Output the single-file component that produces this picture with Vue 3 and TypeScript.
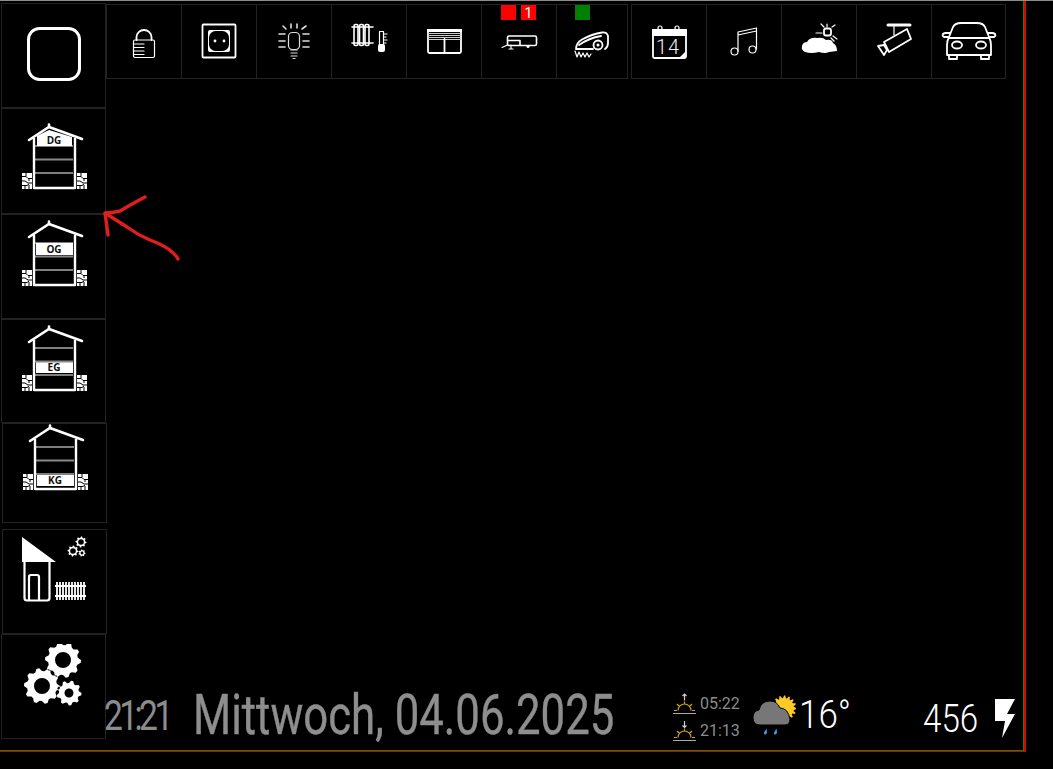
<script setup lang="ts">
interface Floor {
  id: string
  bandTop: number
  bandBottom: number
}

const floors: Floor[] = [
  { id: 'DG', bandTop: 12, bandBottom: 23 },
  { id: 'OG', bandTop: 23, bandBottom: 35 },
  { id: 'EG', bandTop: 37, bandBottom: 48 },
  { id: 'KG', bandTop: 51, bandBottom: 62 },
]

// toothed ring, also used for the sun in the weather icon
function gearPath(cx: number, cy: number, outer: number, inner: number, hole: number, teeth: number): string {
  const pts: string[] = []
  const step = (Math.PI * 2) / (teeth * 4)
  for (let i = 0; i < teeth * 4; i++) {
    const r = i % 4 < 2 ? outer : inner
    const a = i * step
    pts.push(`${(cx + Math.cos(a) * r).toFixed(2)} ${(cy + Math.sin(a) * r).toFixed(2)}`)
  }
  let d = `M${pts.join('L')}Z`
  if (hole > 0) {
    d += `M${cx - hole} ${cy}a${hole} ${hole} 0 1 0 ${hole * 2} 0a${hole} ${hole} 0 1 0 ${-hole * 2} 0Z`
  }
  return d
}

const settingsGears = [
  gearPath(40, 16, 18, 15, 8, 10),
  gearPath(19, 42, 18, 15, 8, 10),
  gearPath(46, 49, 12.5, 10, 4.5, 9),
].join('')

const gardenGears = [
  gearPath(61, 7, 5.5, 4.2, 2.8, 8),
  gearPath(53, 16, 5.5, 4.2, 2.8, 8),
  gearPath(62, 18, 3.6, 2.7, 1.4, 7),
].join('')

const sunSpikes = gearPath(32, 13, 12.5, 10, 0, 16)
</script>

<template>
  <div class="screen">
    <aside class="sidebar">
      <div class="side-tile tile-all">
        <svg class="all-icon" viewBox="0 0 54 54">
          <rect x="1.5" y="1.5" width="51" height="51" rx="11" />
        </svg>
      </div>

      <div v-for="floor in floors" :key="floor.id" class="side-tile" :class="`tile-${floor.id.toLowerCase()}`">
        <svg class="house" viewBox="0 0 72 70">
          <polygon v-if="floor.id === 'DG'" class="band" points="19,23 19,13 31,7 54,14 54,23" />
          <rect v-else class="band" x="18" :y="floor.bandTop" width="37" :height="floor.bandBottom - floor.bandTop" />
          <path class="line-thin" d="M17 23H55M17 50H55" />
          <path class="line-grey" d="M17 36.5H55" />
          <polyline class="roof" points="11,17 31,4 64,16" />
          <path class="roof" d="M31 1.5V4" />
          <path class="walls" d="M16 15V65H57V15" />
          <text class="floor-label" x="36" :y="floor.bandBottom - 2">{{ floor.id }}</text>
          <g v-for="x in [4, 59]" :key="x" :transform="`translate(${x} 50)`">
            <rect class="brick" width="10" height="16" />
            <path class="brick-gap" d="M0 3.5H4L6 5.5H10M0 8H3L6 10H10M0 12.5H5L7 11M4 0V3.5M7 5.5V8M3 12.5V16M7 12V16" />
          </g>
        </svg>
      </div>

      <div class="side-tile tile-garden">
        <svg class="garden" viewBox="0 0 70 70">
          <polygon class="solid" points="2,2 36,27 2,27" />
          <path class="outline" d="M4.5 27V63Q4.5 65.5 7 65.5H27Q29.5 65.5 29.5 63V27M9 65V42Q9 40 11 40H17Q19 40 19 42V65" />
          <path class="fence" d="M35 51H66M35 61H66M37 47V65M40 47V65M43 47V65M46 47V65M49 47V65M52 47V65M55 47V65M58 47V65M61 47V65M64 47V65" />
          <path class="solid" fill-rule="evenodd" :d="gardenGears" />
        </svg>
      </div>

      <div class="side-tile tile-settings">
        <svg class="settings" viewBox="0 0 72 80">
          <path class="solid" fill-rule="evenodd" :d="settingsGears" />
        </svg>
      </div>
    </aside>

    <main class="main">
      <nav class="toolbar">
        <div class="tool">
          <svg viewBox="0 0 75 75">
            <path class="stroke thick" d="M30.5 36V33A7.5 7 0 0 1 45.5 33V36" />
            <rect class="stroke" x="27.5" y="36" width="21" height="17.5" rx="1.5" />
            <path class="stroke" d="M28 40H38M28 43.5H38M28 47H38M28 50.5H38" />
          </svg>
        </div>
        <div class="tool">
          <svg viewBox="0 0 75 75">
            <rect class="stroke thick" x="21.5" y="20.5" width="33" height="33" rx="1" />
            <rect class="solid" x="27" y="26" width="22" height="22" rx="2" />
            <rect class="cut" x="28" y="27" width="20" height="20" rx="6.5" />
            <circle class="solid" cx="34" cy="37" r="1.4" />
            <circle class="solid" cx="43" cy="37" r="1.4" />
          </svg>
        </div>
        <div class="tool">
          <svg viewBox="0 0 75 75">
            <rect class="stroke soft" x="32.5" y="28.5" width="11" height="17" rx="4" />
            <path class="stroke soft" d="M35 46H41M35 49H41M35 52H41M37 54.5H39" />
            <path class="stroke soft wide" d="M23 30H29M23 37H29M23 43H29M47 30H53M47 37H53M47 43H53M27 22L30 25M35 20V24M41 20V24M50 22L46 25" />
          </svg>
        </div>
        <div class="tool">
          <svg viewBox="0 0 75 75">
            <path class="stroke wide" d="M21 23H42M21 39H42" />
            <rect class="stroke wide" x="23" y="20.5" width="4" height="21" rx="1.5" />
            <rect class="stroke wide" x="28.5" y="20.5" width="4" height="21" rx="1.5" />
            <rect class="stroke wide" x="34" y="20.5" width="4" height="21" rx="1.5" />
            <path class="stroke" d="M48.5 41V27.5H52.5V41M52.5 30H56M52.5 33H55M52.5 36H56M52.5 39H55" />
            <rect class="solid" x="47" y="40" width="7" height="8" rx="2" />
          </svg>
        </div>
        <div class="tool">
          <svg viewBox="0 0 75 75">
            <rect class="stroke thick" x="22" y="26" width="33" height="23" rx="1.5" />
            <rect class="solid" x="21" y="25" width="35" height="3" />
            <path class="stroke slat" d="M22 29.5H55M22 31.5H55M22 33.5H55M22 35.5H55" />
            <path class="stroke thick" d="M38.5 35V49" />
          </svg>
        </div>
        <div class="tool">
          <span class="badge badge-red"></span>
          <span class="badge badge-count">1</span>
          <svg viewBox="0 0 75 75">
            <rect class="stroke wide" x="26.5" y="32" width="29" height="9.5" rx="1.5" />
            <path class="stroke wide" d="M27 36.5H39M39 36.5V41" />
            <path class="stroke" d="M21 43.5L26.5 41M30 41V45M28 45H32" />
            <circle class="solid" cx="47" cy="42.5" r="1.5" />
          </svg>
        </div>
        <div class="tool tool-mower">
          <svg viewBox="0 0 75 75">
            <path class="stroke thick" d="M20 45Q20 39 26 35.5Q36 30 46 28.5Q51 28 52 32V39Q52 43 49 45M20 45H37" />
            <path class="stroke thick" d="M23 41Q33 34 45 32" />
            <circle class="stroke thick" cx="42" cy="41" r="4.5" />
            <circle class="solid" cx="42" cy="41" r="1.5" />
            <path class="stroke" d="M19 47L21 53L23 48L25 53L27 49L29 53L31 49L33 53L35 50" />
          </svg>
          <span class="badge badge-green"></span>
        </div>
        <div class="tool">
          <svg viewBox="0 0 75 75">
            <rect class="stroke thick" x="22" y="26" width="33" height="28" rx="1.5" />
            <rect class="solid" x="21" y="25" width="35" height="7" />
            <circle class="stroke" cx="29" cy="24" r="2" />
            <circle class="stroke" cx="46" cy="24" r="2" />
            <text class="calendar-day" x="37" y="50">14</text>
            <polygon class="solid" points="55,47 55,54 48,54" />
          </svg>
        </div>
        <div class="tool">
          <svg viewBox="0 0 75 75">
            <circle class="stroke" cx="28.5" cy="47.5" r="3.5" />
            <circle class="stroke" cx="46.5" cy="45.5" r="3.5" />
            <path class="stroke" d="M32 47V28L50.5 24V45M32 31L50.5 27" />
          </svg>
        </div>
        <div class="tool">
          <svg viewBox="0 0 75 75">
            <path class="solid" d="M24 48Q20 46 21 42Q22 38 26 38Q29 33 36 34Q42 33 45 36Q51 35 52 39Q56 41 56 47L48 48Q44 50 38 48Q30 50 24 48Z" />
            <rect class="stroke thick" x="43" y="24.5" width="7" height="7" rx="2" />
            <path class="stroke" d="M35 29H41M40 20L43 23M46 20V23M51 23L54 21M52 32L56 35M50 34L53 37" />
          </svg>
        </div>
        <div class="tool">
          <svg viewBox="0 0 75 75">
            <path class="stroke bar" d="M32 21H54" />
            <path class="stroke" d="M38 22V31" />
            <polygon class="stroke thick" points="28,38 51,25 55,35 33,48" />
            <polygon class="stroke thick" points="22,42 28,41 31,46 28,51" />
          </svg>
        </div>
        <div class="tool tool-last">
          <svg viewBox="0 0 75 75">
            <path class="stroke thick" d="M18 33L22 23Q24 19 30 19H46Q52 19 54 23L58 33Q60 37 60 41V51H16V41Q16 37 18 33Z" />
            <path class="stroke thick" d="M18 34H58" />
            <path class="stroke thick" d="M18 51V55H26V51M50 51V55H58V51" />
            <path class="stroke thick" d="M17 33H13Q11 32 12 30Q13 29 15 29H19M59 33H63Q65 32 64 30Q63 29 61 29H57" />
            <ellipse class="stroke thick" cx="26" cy="41" rx="5" ry="3.5" />
            <ellipse class="stroke thick" cx="50" cy="41" rx="5" ry="3.5" />
          </svg>
        </div>
      </nav>

      <footer class="status">
        <div class="clock">21:21</div>
        <div class="date">Mittwoch, 04.06.2025</div>

        <div class="sun-times">
          <div class="sun-row">
            <svg class="sun-icon" viewBox="0 0 24 22">
              <path class="sun-horizon" d="M0 20.5H23" />
              <path class="sun-stroke" d="M5 17.5A6.5 6.5 0 0 1 18 17.5M1 17.5H4M19 17.5H22M4 11L6.5 13.5M19 11L16.5 13.5M11.5 8.5V10.5" />
              <path class="sun-arrow" d="M11.5 7.5V1M9.5 3L11.5 1L13.5 3" />
            </svg>
            <span>05:22</span>
          </div>
          <div class="sun-row">
            <svg class="sun-icon" viewBox="0 0 24 22">
              <path class="sun-horizon" d="M0 20.5H23" />
              <path class="sun-stroke" d="M5 17.5A6.5 6.5 0 0 1 18 17.5M1 17.5H4M19 17.5H22M4 11L6.5 13.5M19 11L16.5 13.5M11.5 8.5V10.5" />
              <path class="sun-arrow" d="M11.5 1V7.5M9.5 5.5L11.5 7.5L13.5 5.5" />
            </svg>
            <span>21:13</span>
          </div>
        </div>

        <svg class="weather-icon" viewBox="0 0 44 40">
          <path class="weather-sun" :d="sunSpikes" />
          <path class="weather-cloud" d="M8 30Q1 30 1 22.5Q1 16 7 15Q9 6 18 6Q25 6 28 13Q36 13 38 24Q38 30 33 30Z" />
          <path class="weather-drop" d="M14.5 33.5L12 37.5Q11.5 40 13.5 39.5Q15 39 15 37ZM24.5 33.5L22 37.5Q21.5 40 23.5 39.5Q25 39 25 37Z" />
        </svg>
        <div class="temperature">16°</div>

        <div class="power">456</div>
        <svg class="bolt" viewBox="0 0 20 39">
          <polygon points="0,0 20,0 12,15 20,15 7,39 10,22 0,22" />
        </svg>
      </footer>
    </main>

    <svg class="arrow" viewBox="0 0 90 80">
      <path d="M45 7Q30 15 20 21Q12 23 5 23M5 23L8 45M5 23Q16 30 27 37Q38 45 50 50Q66 56 72 62Q76 65 78 69" />
    </svg>
  </div>
</template>

<style>
html,
body {
  background: #000;
}
</style>

<style scoped>
.screen {
  position: relative;
  display: flex;
  width: 1026px;
  height: 752px;
  box-sizing: border-box;
  background: #000;
  border-right: 2px solid #e00000;
  border-bottom: 1px solid #d00000;
  box-shadow: inset -1px -1px 0 #0a8a0a;
  font-family: Roboto, sans-serif;
}

.screen::before {
  content: '';
  position: absolute;
  top: 0;
  left: 0;
  width: 1053px;
  height: 1px;
  background: #8c8c8c;
}

.sidebar {
  flex: none;
  display: flex;
  flex-direction: column;
  width: 106px;
  padding-top: 3px;
}

.side-tile {
  flex: none;
  display: flex;
  align-items: flex-start;
  box-sizing: border-box;
  width: 105px;
  height: 105px;
  margin-left: 1px;
  border: 1px solid #222;
}

.tile-all {
  padding: 23px 0 0 25px;
}

.tile-dg {
  height: 106px;
  padding: 14px 0 0 16px;
}

.tile-og {
  padding: 5px 0 0 16px;
}

.tile-eg {
  height: 104px;
  padding: 5px 0 0 16px;
}

.tile-kg {
  height: 100px;
  margin-left: 2px;
  margin-bottom: 6px;
  padding: 0 0 0 16px;
}

.tile-garden {
  margin-left: 2px;
  padding: 5px 0 0 17px;
}

.tile-settings {
  padding: 9px 0 0 21px;
}

.all-icon {
  width: 54px;
  height: 54px;
}

.all-icon rect {
  fill: none;
  stroke: #fff;
  stroke-width: 3;
}

.house {
  width: 72px;
  height: 70px;
}

.band {
  fill: #fff;
}

.line-thin {
  stroke: #fff;
  stroke-width: 1;
}

.line-grey {
  stroke: #888;
  stroke-width: 2;
}

.roof {
  fill: none;
  stroke: #fff;
  stroke-width: 2.6;
  stroke-linecap: round;
}

.walls {
  fill: none;
  stroke: #fff;
  stroke-width: 2.4;
  stroke-linejoin: round;
}

.floor-label {
  font-family: 'Liberation Sans Narrow', 'Open Sans', sans-serif;
  font-size: 10px;
  font-weight: 700;
  text-anchor: middle;
  fill: #111;
}

.brick {
  fill: #fff;
}

.brick-gap {
  fill: none;
  stroke: #000;
  stroke-width: 1;
}

.garden {
  width: 70px;
  height: 70px;
}

.settings {
  width: 72px;
  height: 80px;
}

.solid {
  fill: #fff;
}

.outline {
  fill: none;
  stroke: #fff;
  stroke-width: 2.2;
}

.fence {
  fill: none;
  stroke: #fff;
  stroke-width: 1.8;
}

.main {
  flex: 1;
  display: flex;
  flex-direction: column;
  min-width: 0;
}

.toolbar {
  display: flex;
  margin-top: 4px;
}

.tool {
  position: relative;
  flex: none;
  width: 75px;
  height: 75px;
  box-shadow: inset 1px 1px 0 #222, inset 0 -1px 0 #222;
}

.tool svg {
  display: block;
  width: 75px;
  height: 75px;
}

.tool-mower {
  width: 72px;
  margin-right: 3px;
  box-shadow: inset 1px 1px 0 #222, inset 0 -1px 0 #222, inset -1px 0 0 #222;
}

.tool-last {
  box-shadow: inset 1px 1px 0 #222, inset -1px -1px 0 #222;
}

.stroke {
  fill: none;
  stroke: #fff;
  stroke-width: 1.2;
  stroke-linecap: round;
  stroke-linejoin: round;
}

.stroke.thick {
  stroke-width: 1.8;
}

.stroke.soft {
  stroke: #ddd;
}

.stroke.wide {
  stroke-width: 1.6;
}

.stroke.slat {
  stroke: #ccc;
  stroke-linecap: butt;
}

.stroke.bar {
  stroke-width: 3;
}

.cut {
  fill: #000;
}

.calendar-day {
  font-family: Roboto, sans-serif;
  font-size: 20px;
  font-weight: 300;
  letter-spacing: 1px;
  text-anchor: middle;
  fill: #eee;
}

.badge {
  position: absolute;
  top: 1px;
  width: 15px;
  height: 15px;
  background: #f00;
  color: #fff;
  font-size: 14px;
  line-height: 17px;
  text-align: center;
}

.badge-red {
  left: 20px;
}

.badge-count {
  left: 40px;
}

.badge-green {
  left: 19px;
  background: #008000;
}

.status {
  display: flex;
  align-items: center;
  height: 50px;
  margin-top: auto;
  margin-bottom: 11px;
}

.clock,
.date,
.temperature,
.power {
  flex: none;
  transform-origin: left center;
}

.clock {
  width: 89px;
  margin-left: -2px;
  color: #8c8c8c;
  font-size: 42px;
  letter-spacing: -4.5px;
  transform: scaleX(0.8);
}

.date {
  width: 480px;
  color: #8e8e8e;
  font-size: 55px;
  white-space: nowrap;
  -webkit-text-stroke: 0.4px #8e8e8e;
  transform: scaleX(0.795);
}

.sun-times {
  flex: none;
  display: flex;
  flex-direction: column;
  gap: 5px;
  width: 79px;
  margin-top: 4px;
}

.sun-row {
  display: flex;
  align-items: center;
  gap: 3px;
  color: #8c8c8c;
  font-size: 16px;
}

.sun-icon {
  width: 24px;
  height: 22px;
}

.sun-horizon {
  fill: none;
  stroke: #aaa;
  stroke-width: 1;
}

.sun-stroke {
  fill: none;
  stroke: #c9a227;
  stroke-width: 1.2;
}

.sun-arrow {
  fill: none;
  stroke: #ccc;
  stroke-width: 1.2;
}

.weather-icon {
  flex: none;
  width: 44px;
  height: 40px;
  margin-right: 3px;
}

.weather-sun {
  fill: #ffc926;
}

.weather-cloud {
  fill: #777;
  stroke: #000;
  stroke-width: 1;
}

.weather-drop {
  fill: #3f9ae6;
}

.temperature {
  width: 124px;
  margin-top: 0;
  color: #fff;
  font-size: 38px;
  font-weight: 300;
  transform: scaleX(0.92);
}

.power {
  width: 72px;
  margin-top: 8px;
  color: #fff;
  font-size: 39px;
  font-weight: 300;
  transform: scaleX(0.85);
}

.bolt {
  flex: none;
  width: 20px;
  height: 39px;
  margin-top: 6px;
  fill: #fff;
}

.arrow {
  position: absolute;
  top: 190px;
  left: 100px;
  width: 90px;
  height: 80px;
  fill: none;
  stroke: #e11d1d;
  stroke-width: 3.4;
  stroke-linecap: round;
  stroke-linejoin: round;
  pointer-events: none;
}
</style>
